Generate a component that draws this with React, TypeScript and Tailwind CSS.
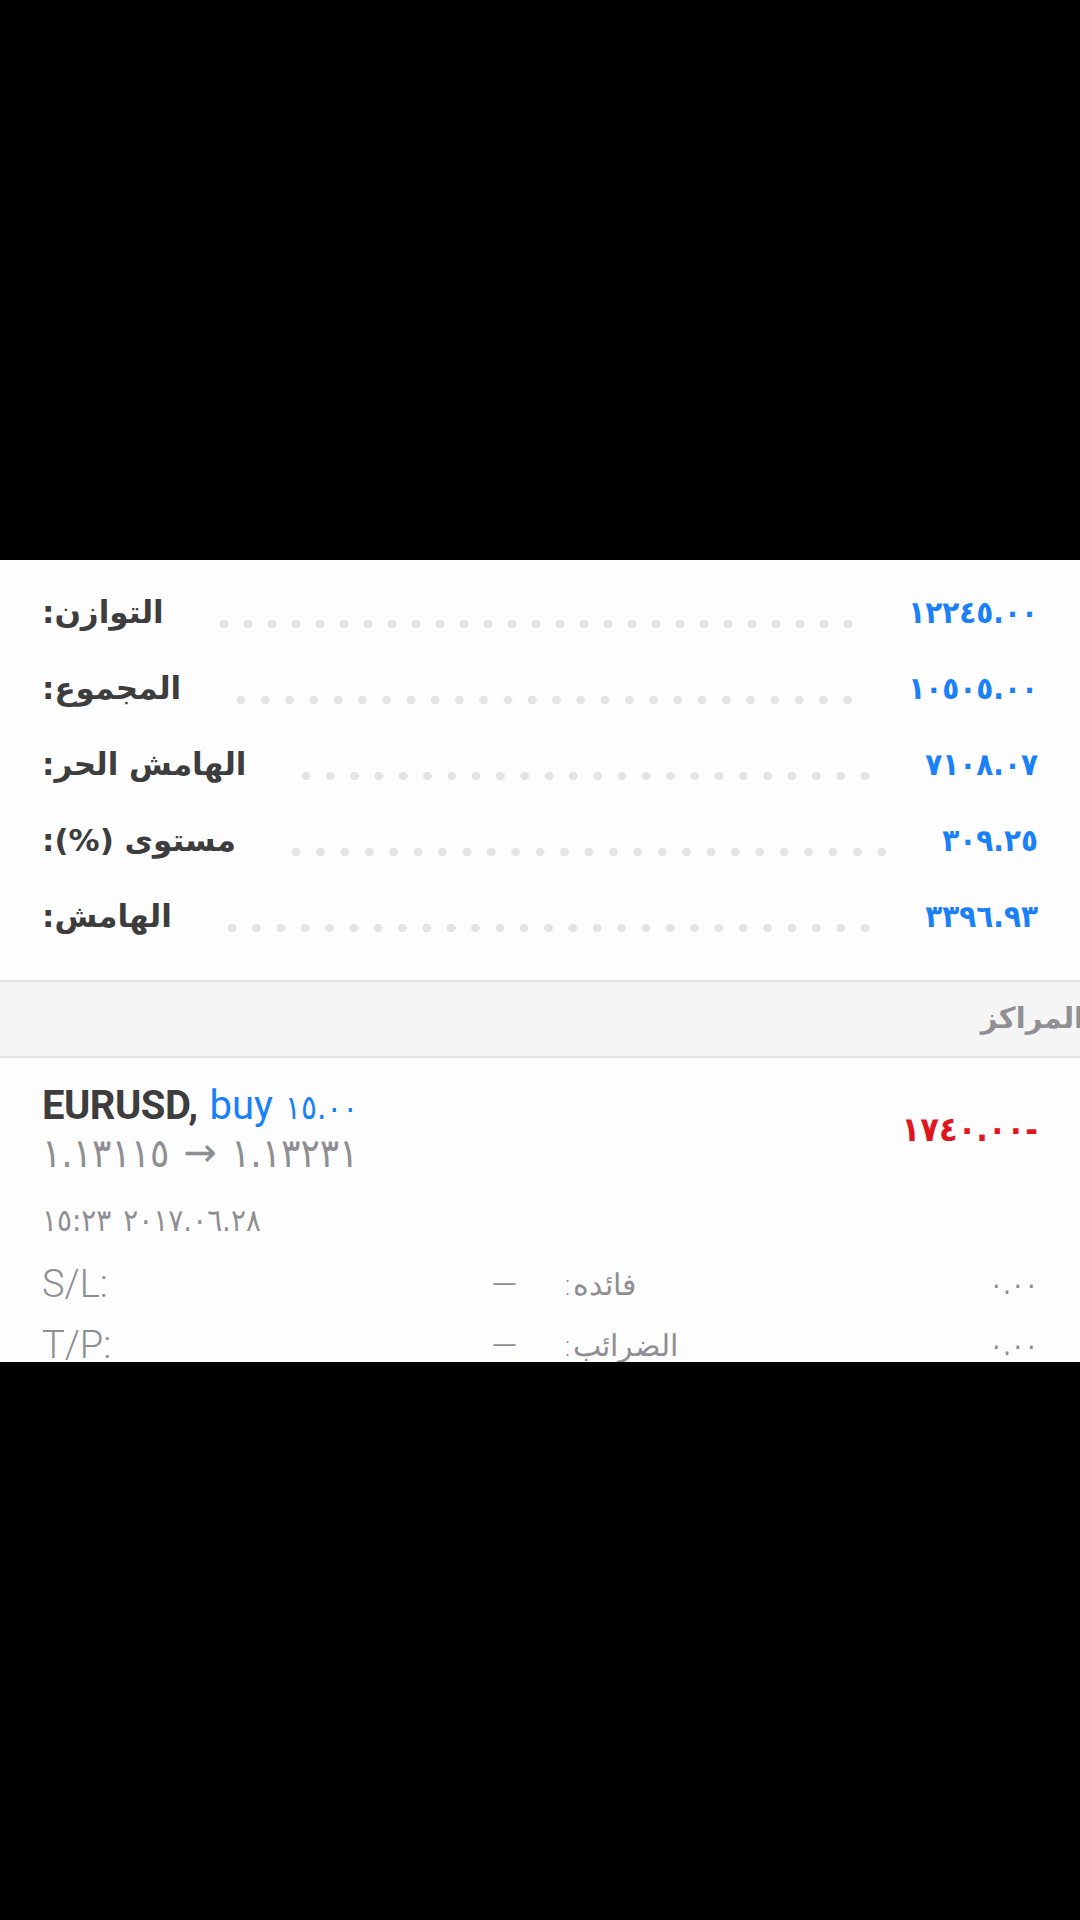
import React from "react";

const arabic = "font-['DejaVu_Sans','Noto_Sans',sans-serif]";
const digits = "font-['DejaVu_Sans_Condensed','DejaVu_Sans',sans-serif]";
const latin = "font-['Roboto','DejaVu_Sans',sans-serif]";

const summary = [
  { label: "التوازن:", value: "١٢٢٤٥.٠٠" },
  { label: "المجموع:", value: "١٠٥٠٥.٠٠" },
  { label: "الهامش الحر:", value: "٧١٠٨.٠٧" },
  { label: "مستوى (%):", value: "٣٠٩.٢٥" },
  { label: "الهامش:", value: "٣٣٩٦.٩٣" },
];

const SummaryRow = ({ label, value }: { label: string; value: string }) => (
  <div className="flex h-[76px] items-center">
    <span dir="rtl" className={`${arabic} text-[31px] font-bold text-[#3d3d3d]`}>
      {label}
    </span>
    <div className="mx-[48px] mt-[24px] h-[10px] flex-1 bg-[radial-gradient(circle,#e4e4e4_4px,transparent_4.6px)] bg-[length:24px_10px] bg-repeat-space" />
    <span dir="ltr" className={`${digits} text-[31px] font-bold text-[#1a80f8]`}>
      {value}
    </span>
  </div>
);

const DetailRow = ({ left, right, value }: { left: string; right: string; value: string }) => (
  <div className="grid h-[61px] grid-cols-2 items-center gap-[45px] text-[#8e8e93]">
    <div className="flex items-center justify-between">
      <span className={`${latin} text-[38px] font-light`}>{left}</span>
      <span className={`${latin} text-[34px] font-light`}>—</span>
    </div>
    <div className="flex items-center justify-between">
      <span dir="rtl" className={`${arabic} text-[30px] font-light`}>
        {right}
      </span>
      <span className={`${digits} text-[28px]`}>{value}</span>
    </div>
  </div>
);

export default function App() {
  return (
    <div className="flex min-h-[1920px] w-[1080px] flex-col bg-black">
      <div className="h-[560px]" />
      <div className="h-[802px] overflow-hidden bg-[#fdfdfd]">
        <div className="px-[42px] pt-[14px]">
          {summary.map((row) => (
            <SummaryRow key={row.label} label={row.label} value={row.value} />
          ))}
        </div>

        <div className="mt-[26px] flex h-[78px] items-center justify-end border-y-2 border-[#e3e3e3] bg-[#f5f5f5]">
          <span dir="rtl" className={`${arabic} -mr-[4px] text-[29px] font-bold text-[#909094]`}>
            المراكز
          </span>
        </div>

        <div className="px-[42px] pt-[24px]">
          <div className="flex items-center justify-between">
            <div>
              <div className="flex h-[48px] items-baseline leading-[48px]">
                <span className={`${latin} text-[40px] font-bold tracking-[-0.5px] text-[#3d3d3d]`}>EURUSD,</span>
                <span className={`${latin} ml-[12px] text-[40px] text-[#1a80f8]`}>buy</span>
                <span dir="ltr" className={`${digits} ml-[12px] text-[33px] text-[#1a80f8]`}>
                  ١٥.٠٠
                </span>
              </div>
              <div className={`${digits} flex h-[46px] items-center gap-[14px] text-[40px] leading-[46px] text-[#8e8e93]`}>
                <span dir="ltr">١.١٣١١٥</span>
                <span className={`${latin} font-medium`}>→</span>
                <span dir="ltr">١.١٣٢٣١</span>
              </div>
            </div>
            <span dir="ltr" className={`${digits} text-[34px] font-bold text-[#e0161e]`}>
              ١٧٤٠.٠٠-
            </span>
          </div>

          <div className={`${digits} mt-[26px] flex h-[36px] items-center gap-[12px] text-[31px] text-[#8e8e93]`}>
            <span dir="ltr">١٥:٢٣</span>
            <span dir="ltr">٢٠١٧.٠٦.٢٨</span>
          </div>

          <div className="mt-[16px]">
            <DetailRow left="S/L:" right="فائده:" value="٠.٠٠" />
            <DetailRow left="T/P:" right="الضرائب:" value="٠.٠٠" />
          </div>
        </div>
      </div>
      <div className="flex-1" />
    </div>
  );
}
